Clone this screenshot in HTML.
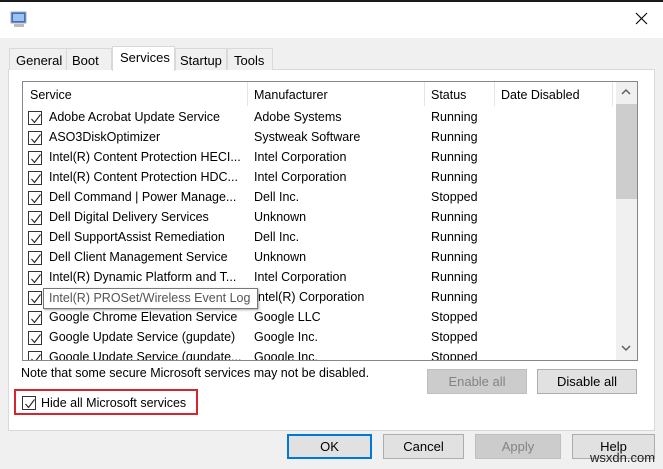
<!DOCTYPE html><html><head><style>
*{margin:0;padding:0;box-sizing:border-box}
body{width:663px;height:469px;background:#f0f0f0;font-family:"Liberation Sans",sans-serif;font-size:12.5px;color:#000;position:relative;overflow:hidden}
.a{position:absolute;white-space:nowrap}
.cb{position:absolute;width:14px;height:14px;border:1px solid #333;background:#fff}
.cb svg{position:absolute;left:1px;top:1px}
.btn{position:absolute;border:1px solid #adadad;background:#e1e1e1;text-align:center;line-height:23px;font-size:13px}
</style></head><body>
<div class="a" style="left:0;top:0;width:663px;height:2px;background:#1a1a1a"></div>
<div class="a" style="left:0;top:2px;width:663px;height:36px;background:#fff"></div>
<svg class="a" style="left:10px;top:10px" width="18" height="18"><rect x="1" y="2" width="15" height="11" fill="#3b6fc4" stroke="#aab" /><rect x="3" y="4" width="11" height="7" fill="#9cc2ee"/><rect x="4" y="14" width="10" height="3" fill="#bbb"/></svg>
<svg class="a" style="left:635px;top:12px" width="13" height="13"><path d="M1 1L12 12M12 1L1 12" stroke="#000" stroke-width="1.1"/></svg>
<div class="a" style="left:8px;top:69px;width:647px;height:362px;background:#fff;border:1px solid #d9d9d9"></div>
<div class="a" style="left:9px;top:48px;width:58px;height:22px;border:1px solid #d9d9d9;border-bottom:none;background:#f0f0f0;padding:4px 0 0 6px;font-size:13px">General</div>
<div class="a" style="left:66px;top:48px;width:46px;height:22px;border:1px solid #d9d9d9;border-bottom:none;background:#f0f0f0;padding:4px 0 0 5px;font-size:13px">Boot</div>
<div class="a" style="left:112px;top:46px;width:63px;height:25px;border:1px solid #d9d9d9;border-bottom:none;background:#fff;padding:3px 0 0 7px;font-size:13px">Services</div>
<div class="a" style="left:175px;top:48px;width:52px;height:22px;border:1px solid #d9d9d9;border-bottom:none;background:#f0f0f0;padding:4px 0 0 4px;font-size:13px">Startup</div>
<div class="a" style="left:227px;top:48px;width:46px;height:22px;border:1px solid #d9d9d9;border-bottom:none;background:#f0f0f0;padding:4px 0 0 6px;font-size:13px">Tools</div>
<div class="a" style="left:22px;top:81px;width:616px;height:280px;border:1px solid #828790;background:#fff;overflow:hidden">
<div class="a" style="left:7px;top:6px">Service</div>
<div class="a" style="left:231px;top:6px">Manufacturer</div>
<div class="a" style="left:408px;top:6px">Status</div>
<div class="a" style="left:478px;top:6px">Date Disabled</div>
<div class="a" style="left:224px;top:0;width:1px;height:24px;background:#e5e5e5"></div>
<div class="a" style="left:401px;top:0;width:1px;height:24px;background:#e5e5e5"></div>
<div class="a" style="left:471px;top:0;width:1px;height:24px;background:#e5e5e5"></div>
<div class="a" style="left:589px;top:0;width:1px;height:24px;background:#e5e5e5"></div>
<div class="a" style="left:593px;top:0;width:21px;height:278px;background:#f0f0f0"></div>
<div class="a" style="left:593px;top:22px;width:21px;height:95px;background:#cdcdcd"></div>
<svg class="a" style="left:598px;top:6px" width="10" height="8"><path d="M1 6L5 2L9 6" stroke="#606060" stroke-width="1.5" fill="none"/></svg>
<svg class="a" style="left:598px;top:262px" width="10" height="8"><path d="M1 2L5 6L9 2" stroke="#606060" stroke-width="1.5" fill="none"/></svg>
<div id="rows"></div>
</div>
<div class="a" style="left:21px;top:366px">Note that some secure Microsoft services may not be disabled.</div>
<div class="btn" style="left:427px;top:369px;width:100px;height:25px;border-color:#bfbfbf;background:#cccccc;color:#838383">Enable all</div>
<div class="btn" style="left:537px;top:369px;width:100px;height:25px">Disable all</div>
<div class="a" style="left:14px;top:389px;width:184px;height:26px;border:2px solid #d7252f"></div>
<div class="cb" style="left:22px;top:396px"><svg width="12" height="12"><path d="M1.5 6L4.5 9.5L10.5 1.5" stroke="#222" stroke-width="1.1" fill="none"/></svg></div>
<div class="a" style="left:41px;top:396px">Hide all Microsoft services</div>
<div class="btn" style="left:287px;top:434px;width:85px;height:25px;border:2px solid #0078d7;line-height:21px">OK</div>
<div class="btn" style="left:383px;top:434px;width:81px;height:25px">Cancel</div>
<div class="btn" style="left:475px;top:434px;width:86px;height:25px;border-color:#bfbfbf;background:#cccccc;color:#838383">Apply</div>
<div class="btn" style="left:572px;top:434px;width:83px;height:25px">Help</div>
<div class="a" style="left:590px;top:450px;font-size:13px;color:#222">wsxdn.com</div>
<script>
var d=[["Adobe Acrobat Update Service","Adobe Systems","Running"],["ASO3DiskOptimizer","Systweak Software","Running"],["Intel(R) Content Protection HECI...","Intel Corporation","Running"],["Intel(R) Content Protection HDC...","Intel Corporation","Running"],["Dell Command | Power Manage...","Dell Inc.","Stopped"],["Dell Digital Delivery Services","Unknown","Running"],["Dell SupportAssist Remediation","Dell Inc.","Running"],["Dell Client Management Service","Unknown","Running"],["Intel(R) Dynamic Platform and T...","Intel Corporation","Running"],["Intel(R) PROSet/Wireless Event Log","Intel(R) Corporation","Running"],["Google Chrome Elevation Service","Google LLC","Stopped"],["Google Update Service (gupdate)","Google Inc.","Stopped"],["Google Update Service (gupdate...","Google Inc.","Stopped"]];
var h="";d.forEach(function(r,i){var y=28+i*20;
h+='<div class="cb" style="left:5px;top:'+(y+1)+'px;border-color:#333"><svg width="12" height="12"><path d="M1.5 6L4.5 9.5L10.5 1.5" stroke="#222" stroke-width="1.1" fill="none"/></svg></div>';
if(i==9){h+='<div class="a" style="left:20px;top:'+(y-2)+'px;height:21px;width:215px;border:1px solid #767676;background:#fff;box-shadow:1px 1px 2px #aaa;padding:2px 0 0 5px;color:#555">'+r[0]+'</div>';}
else h+='<div class="a" style="left:26px;top:'+y+'px">'+r[0]+'</div>';
h+='<div class="a" style="left:'+(i==9?235:231)+'px;top:'+y+'px">'+(i==9?'ntel(R) Corporation':r[1])+'</div>';
h+='<div class="a" style="left:408px;top:'+y+'px">'+r[2]+'</div>';});
document.getElementById("rows").innerHTML=h;
</script>
</body></html>
